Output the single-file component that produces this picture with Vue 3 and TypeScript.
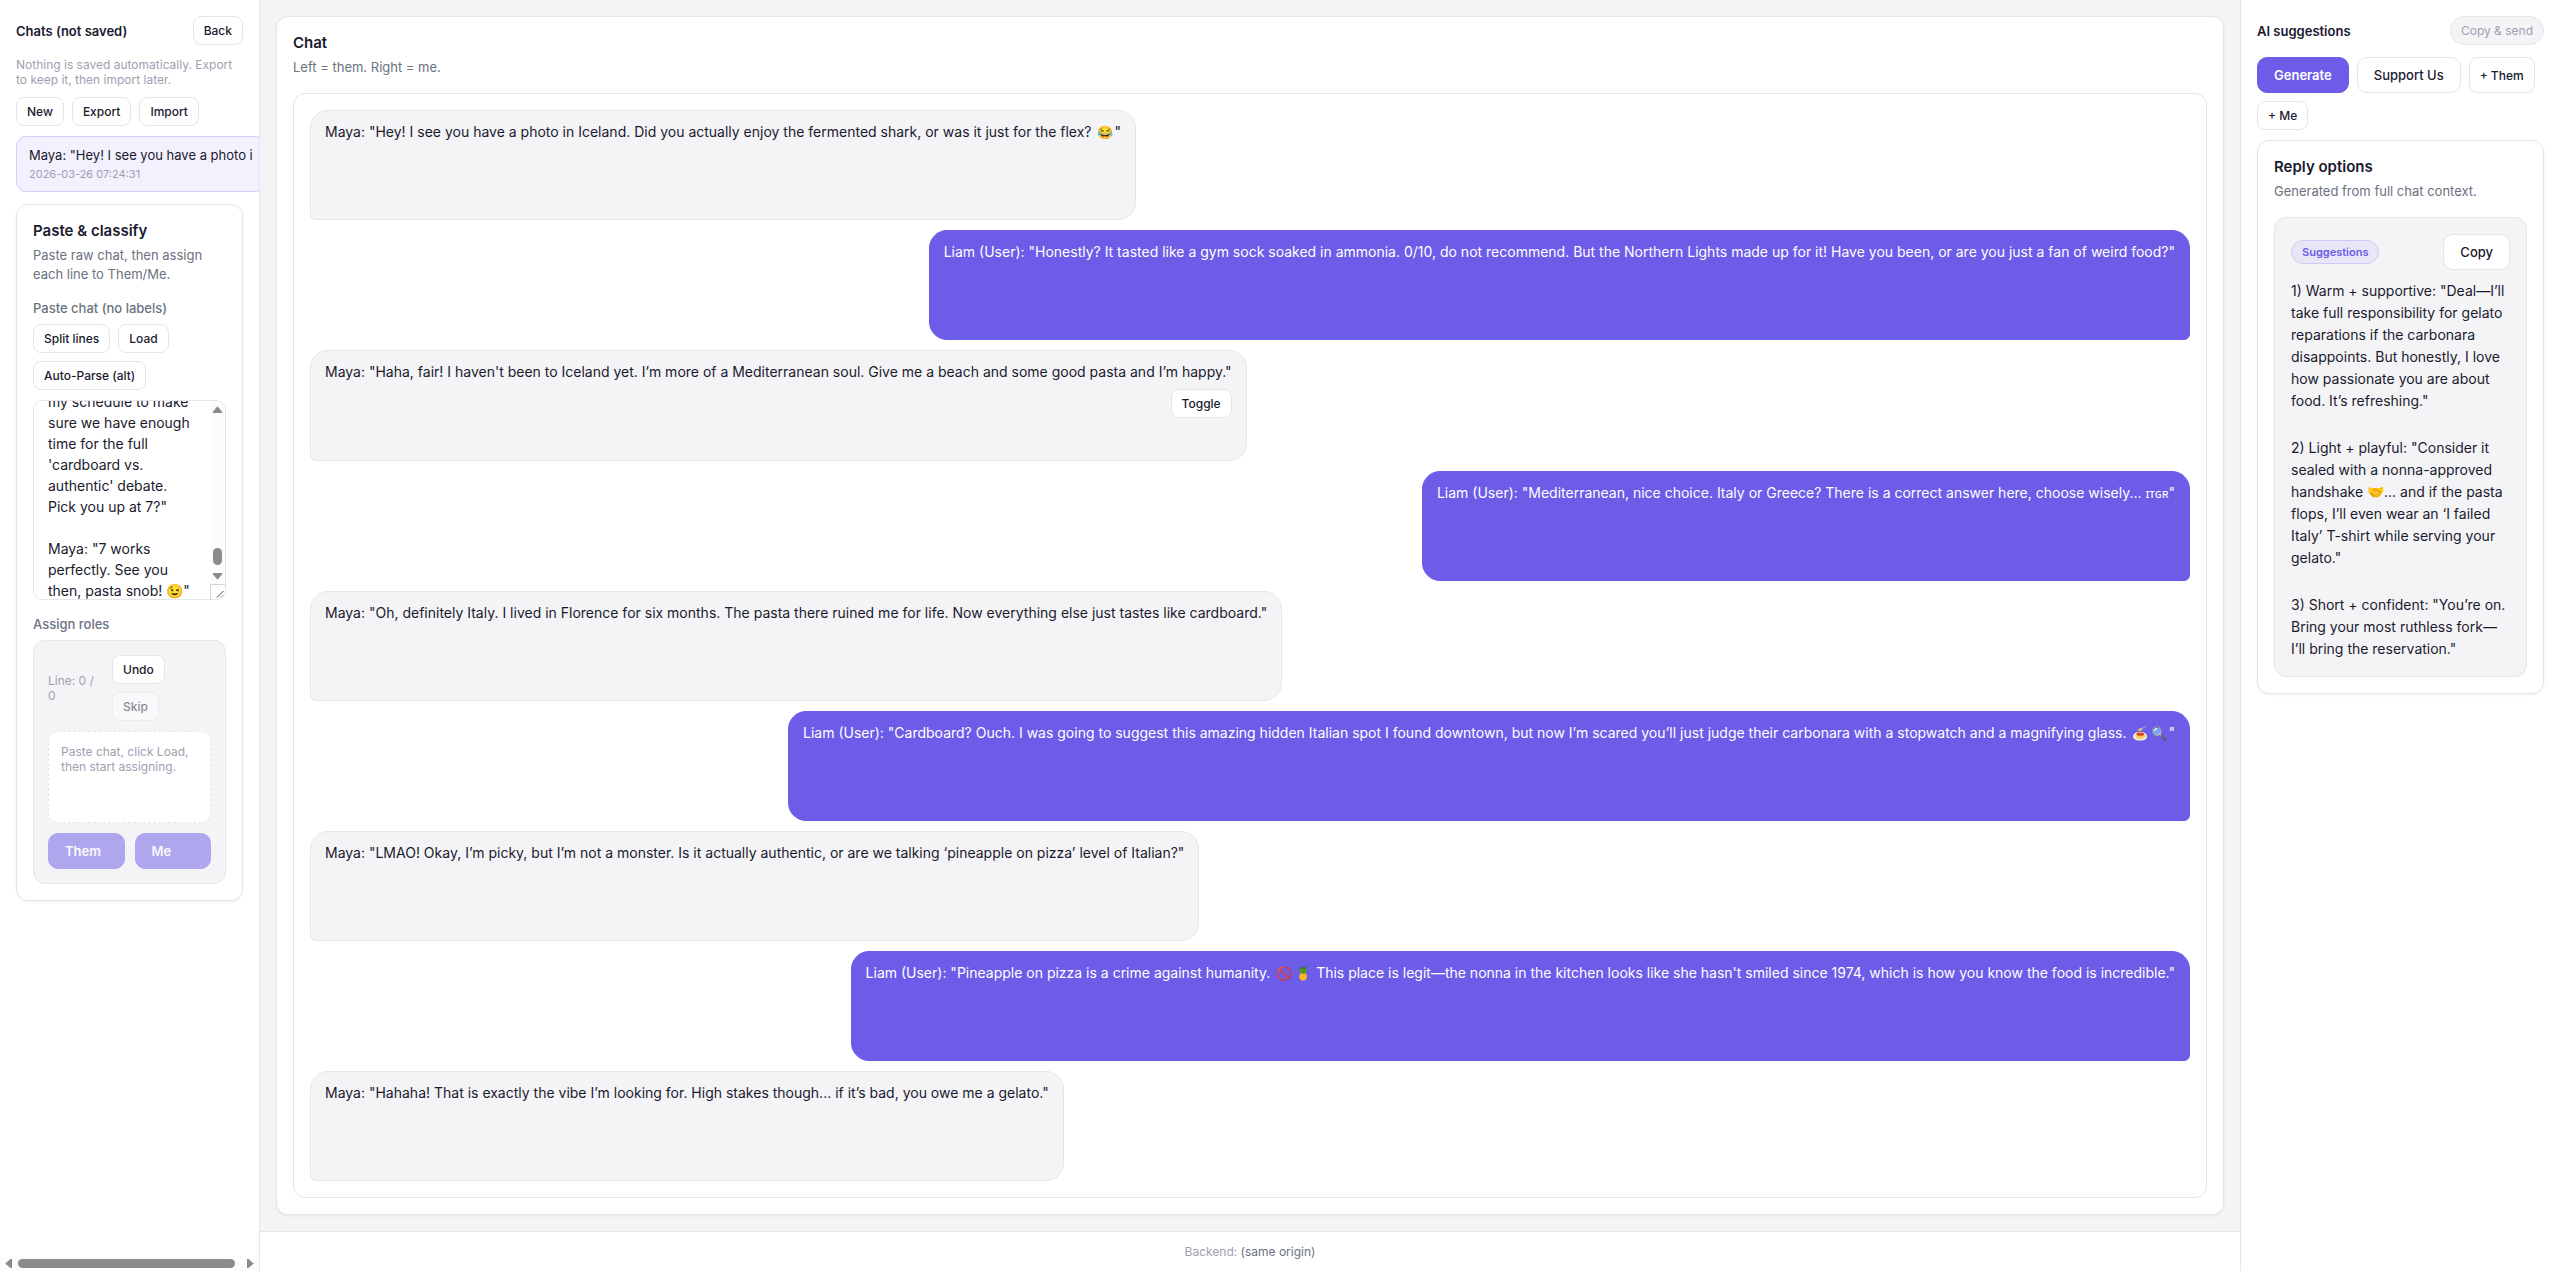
<script setup lang="ts">
import { onMounted, ref } from 'vue'

interface Message {
  from: 'them' | 'me'
  text: string
  toggle?: boolean
}

interface Part {
  kind: 'text' | 'emoji' | 'flags'
  value: string
}

const messages: Message[] = [
  { from: 'them', text: 'Maya: "Hey! I see you have a photo in Iceland. Did you actually enjoy the fermented shark, or was it just for the flex? 😂"' },
  { from: 'me', text: 'Liam (User): "Honestly? It tasted like a gym sock soaked in ammonia. 0/10, do not recommend. But the Northern Lights made up for it! Have you been, or are you just a fan of weird food?"' },
  { from: 'them', text: 'Maya: "Haha, fair! I haven\'t been to Iceland yet. I’m more of a Mediterranean soul. Give me a beach and some good pasta and I’m happy."', toggle: true },
  { from: 'me', text: 'Liam (User): "Mediterranean, nice choice. Italy or Greece? There is a correct answer here, choose wisely... ɪᴛɢʀ"' },
  { from: 'them', text: 'Maya: "Oh, definitely Italy. I lived in Florence for six months. The pasta there ruined me for life. Now everything else just tastes like cardboard."' },
  { from: 'me', text: 'Liam (User): "Cardboard? Ouch. I was going to suggest this amazing hidden Italian spot I found downtown, but now I’m scared you’ll just judge their carbonara with a stopwatch and a magnifying glass. 🍝🔍"' },
  { from: 'them', text: 'Maya: "LMAO! Okay, I’m picky, but I’m not a monster. Is it actually authentic, or are we talking ‘pineapple on pizza’ level of Italian?"' },
  { from: 'me', text: 'Liam (User): "Pineapple on pizza is a crime against humanity. 🚫🍍 This place is legit—the nonna in the kitchen looks like she hasn\'t smiled since 1974, which is how you know the food is incredible."' },
  { from: 'them', text: 'Maya: "Hahaha! That is exactly the vibe I’m looking for. High stakes though... if it’s bad, you owe me a gelato."' },
]

const replies: string[] = [
  '1) Warm + supportive: "Deal—I’ll take full responsibility for gelato reparations if the carbonara disappoints. But honestly, I love how passionate you are about food. It’s refreshing."',
  '2) Light + playful: "Consider it sealed with a nonna-approved handshake 🤝... and if the pasta flops, I’ll even wear an ‘I failed Italy’ T-shirt while serving your gelato."',
  '3) Short + confident: "You’re on. Bring your most ruthless fork—I’ll bring the reservation."',
]

// Splits a message so that emoji and flag codes can be set in their own type.
function parts(text: string): Part[] {
  return text
    .split(/(\p{Extended_Pictographic}|ɪᴛɢʀ)/u)
    .filter((s) => s !== '')
    .map((value): Part => {
      if (value === 'ɪᴛɢʀ') return { kind: 'flags', value }
      return { kind: /^\p{Extended_Pictographic}$/u.test(value) ? 'emoji' : 'text', value }
    })
}

const pasted = ref(
  messages.map((m) => m.text).join('\n\n') +
    '\n\nLiam (User): "It\'s a date. I\'ll be clearing my schedule to make sure we have enough time for the full \'cardboard vs. authentic\' debate. Pick you up at 7?"\n\nMaya: "7 works perfectly. See you then, pasta snob! 😉"',
)

const area = ref<HTMLTextAreaElement | null>(null)
onMounted(() => {
  const el = area.value
  if (el) el.scrollTop = el.scrollHeight - el.clientHeight - 14
})
</script>

<template>
  <div class="app">
    <aside class="side left">
      <div class="left-body">
        <header class="side-head">
          <h2>Chats (not saved)</h2>
          <button class="btn sm" type="button">Back</button>
        </header>
        <p class="note">Nothing is saved automatically. Export to keep it, then import later.</p>
        <div class="row">
          <button class="btn sm" type="button">New</button>
          <button class="btn sm" type="button">Export</button>
          <button class="btn sm" type="button">Import</button>
        </div>
        <button class="chat-item" type="button">
          <span class="chat-name">Maya: "Hey! I see you have a photo i</span>
          <span class="chat-date">2026-03-26 07:24:31</span>
        </button>
        <section class="card">
          <h3>Paste &amp; classify</h3>
          <p class="sub">Paste raw chat, then assign each line to Them/Me.</p>
          <label class="label" for="paste">Paste chat (no labels)</label>
          <div class="row">
            <button class="btn sm" type="button">Split lines</button>
            <button class="btn sm" type="button">Load</button>
            <button class="btn sm" type="button">Auto-Parse (alt)</button>
          </div>
          <div class="paste-wrap">
            <textarea id="paste" ref="area" v-model="pasted" class="paste" spellcheck="false"></textarea>
            <div class="vbar" aria-hidden="true">
              <svg width="9" height="7" viewBox="0 0 9 7"><path d="M4.500.2 9 5.500V7H0V5.500z" fill="#8b8b8b" /></svg>
              <span class="vthumb"></span>
              <svg width="9" height="7" viewBox="0 0 9 7"><path d="M4.500 6.800 9 1.500V0H0v1.500z" fill="#8b8b8b" /></svg>
            </div>
            <svg class="grip" width="15" height="15" viewBox="0 0 15 15" aria-hidden="true">
              <path d="M0 0h15v15H0z" fill="#fff" />
              <path d="M.5 15V.5H15" fill="none" stroke="#d4d4d4" />
              <path d="M7 13.500 13.500 7M11 13.500l2.500-2.500" fill="none" stroke="#444" />
            </svg>
          </div>
          <div class="label">Assign roles</div>
          <div class="assign">
            <div class="assign-top">
              <span class="line-count">Line: 0 / 0</span>
              <div class="row flush">
                <button class="btn sm" type="button">Undo</button>
                <button class="btn sm" type="button" disabled>Skip</button>
              </div>
            </div>
            <div class="preview">Paste chat, click Load, then start assigning.</div>
            <div class="roles">
              <button class="btn primary" type="button" disabled>Them</button>
              <button class="btn primary" type="button" disabled>Me</button>
            </div>
          </div>
        </section>
      </div>
      <div class="hbar" aria-hidden="true">
        <svg width="7" height="9" viewBox="0 0 7 9"><path d="M.2 4.500 5.500 0H7v9H5.500z" fill="#8b8b8b" /></svg>
        <span class="hthumb"></span>
        <svg width="7" height="9" viewBox="0 0 7 9"><path d="M6.800 4.500 1.500 0H0v9h1.500z" fill="#8b8b8b" /></svg>
      </div>
    </aside>

    <div class="center">
      <main class="stage">
        <section class="card chat">
          <h3>Chat</h3>
          <p class="sub">Left = them. Right = me.</p>
          <div class="thread">
            <article v-for="(m, i) in messages" :key="i" class="bubble" :class="m.from">
              <p><span v-for="(p, k) in parts(m.text)" :key="k" :class="p.kind">{{ p.value }}</span></p>
              <button v-if="m.toggle" class="btn sm" type="button">Toggle</button>
            </article>
          </div>
        </section>
      </main>
      <footer class="foot">Backend: <span>(same origin)</span></footer>
    </div>

    <aside class="side right">
      <header class="side-head">
        <h2>AI suggestions</h2>
        <button class="btn sm pill" type="button" disabled>Copy &amp; send</button>
      </header>
      <div class="row">
        <button class="btn primary" type="button">Generate</button>
        <button class="btn" type="button">Support Us</button>
        <button class="btn sm" type="button">+ Them</button>
        <button class="btn sm" type="button">+ Me</button>
      </div>
      <section class="card">
        <h3>Reply options</h3>
        <p class="sub">Generated from full chat context.</p>
        <div class="options">
          <div class="options-head">
            <span class="badge">Suggestions</span>
            <button class="btn" type="button">Copy</button>
          </div>
          <div class="replies">
            <p v-for="r in replies" :key="r">{{ r }}</p>
          </div>
        </div>
      </section>
    </aside>
  </div>
</template>

<style>
body {
  margin: 0;
  background: #f4f4f7;
}
</style>

<style scoped>
.app,
.app * {
  box-sizing: border-box;
}
.app {
  display: grid;
  grid-template-columns: 260px minmax(0, 1fr) 320px;
  min-height: 100vh;
  background: #f4f4f7;
  color: #1a1a2e;
  font-family: Inter, "Liberation Sans", sans-serif;
  font-size: 14px;
}
h2,
h3,
p {
  margin: 0;
}
h2 {
  font-size: 13px;
  line-height: 16px;
  font-weight: 600;
}
h3 {
  margin-bottom: 6px;
  font-size: 15px;
  line-height: 19px;
  font-weight: 600;
}
.side {
  min-width: 0;
  background: #fff;
}
.left {
  display: flex;
  flex-direction: column;
  border-right: 1px solid #e5e5ea;
}
.left-body {
  flex: 1;
  padding: 16px;
  overflow: hidden;
}
.hbar {
  display: flex;
  align-items: center;
  justify-content: space-between;
  height: 15px;
  padding: 0 5px;
  background: #fcfcfc;
}
.hthumb {
  flex: 1;
  height: 9px;
  margin: 0 12px 0 6px;
  border-radius: 5px;
  background: #8b8b8b;
}
.right {
  padding: 16px;
  border-left: 1px solid #e5e5ea;
}
.side-head {
  display: flex;
  align-items: center;
  justify-content: space-between;
  margin-bottom: 12px;
}
.note,
.line-count,
.preview {
  color: #a0a0b0;
  font-size: 12px;
  line-height: 15px;
}
.note {
  margin-bottom: 10px;
}
.row {
  display: flex;
  flex-wrap: wrap;
  gap: 8px;
  margin-bottom: 10px;
}
.row.flush {
  margin-bottom: 0;
}
.btn {
  padding: 9px 16px;
  border: 1px solid #e5e5ea;
  border-radius: 10px;
  background: #fff;
  color: #1a1a2e;
  font-family: inherit;
  font-size: 13px;
  line-height: 16px;
  font-weight: 500;
  text-align: left;
}
.btn.sm {
  padding: 6px 10px;
  border-radius: 8px;
  font-size: 12px;
  line-height: 15px;
}
.btn.primary {
  border-color: #6c5ce7;
  background: #6c5ce7;
  color: #fff;
  font-weight: 600;
}
.btn:disabled {
  opacity: 0.5;
}
.btn.pill {
  border-radius: 15px;
  background: #f4f4f7;
  color: #a0a0b0;
  font-weight: 400;
  opacity: 1;
}
.chat-item {
  display: flex;
  flex-direction: column;
  gap: 4px;
  width: max-content;
  margin-bottom: 12px;
  padding: 10px 12px;
  border: 1px solid #d3cef8;
  border-radius: 10px;
  background: #f3f1fd;
  color: #1a1a2e;
  font-family: inherit;
  text-align: left;
}
.chat-name {
  font-size: 13px;
  line-height: 16px;
}
.chat-date {
  color: #a0a0b0;
  font-size: 11px;
  line-height: 14px;
}
.card {
  padding: 16px;
  border: 1px solid #e5e5ea;
  border-radius: 12px;
  background: #fff;
  box-shadow: 0 1px 3px rgba(0, 0, 0, 0.06);
}
.sub {
  margin-bottom: 16px;
  color: #6b7280;
  font-size: 13px;
  line-height: 19px;
}
.label {
  display: block;
  margin-bottom: 8px;
  color: #6b7280;
  font-size: 13px;
  line-height: 16px;
  font-weight: 500;
}
.paste-wrap {
  position: relative;
  margin-bottom: 16px;
}
.paste {
  display: block;
  width: 100%;
  height: 200px;
  padding: 12px 29px 12px 14px;
  border: 1px solid #e5e5ea;
  border-radius: 10px;
  background: #fff;
  color: #1a1a2e;
  font-family: inherit;
  font-size: 14px;
  line-height: 21px;
  resize: none;
}
.vbar {
  position: absolute;
  top: 1px;
  right: 1px;
  bottom: 16px;
  display: flex;
  flex-direction: column;
  align-items: center;
  width: 15px;
  padding: 5px 0 4px;
  border-top-right-radius: 10px;
  background: #fcfcfc;
}
.vthumb {
  width: 9px;
  height: 17px;
  margin: auto 0 8px;
  border-radius: 5px;
  background: #8b8b8b;
}
.grip {
  position: absolute;
  right: 1px;
  bottom: 1px;
  border-bottom-right-radius: 9px;
}
.assign {
  padding: 14px;
  border: 1px solid #e5e5ea;
  border-radius: 12px;
  background: #f4f4f7;
}
.assign-top {
  display: grid;
  grid-template-columns: 54px 1fr;
  gap: 10px;
  align-items: center;
  margin-bottom: 10px;
}
.preview {
  min-height: 92px;
  margin-bottom: 10px;
  padding: 12px;
  border: 1px dashed #e5e5ea;
  border-radius: 10px;
  background: #fff;
}
.roles {
  display: grid;
  grid-template-columns: 1fr 1fr;
  gap: 10px;
}
.center {
  display: flex;
  flex-direction: column;
  min-width: 0;
}
.stage {
  display: flex;
  flex: 1;
  padding: 16px;
}
.chat {
  display: flex;
  flex: 1;
  flex-direction: column;
  min-width: 0;
}
.thread {
  display: flex;
  flex: 1;
  flex-direction: column;
  gap: 10px;
  padding: 16px;
  border: 1px solid #e5e5ea;
  border-radius: 12px;
}
.bubble {
  display: flex;
  flex: 1 0 auto;
  flex-direction: column;
  align-items: flex-end;
  gap: 6px;
  min-height: 110px;
  max-width: 75%;
  padding: 10px 14px;
  border: 1px solid #e5e5ea;
  font-size: 14px;
  line-height: 22px;
}
.bubble.them {
  align-self: flex-start;
  border-radius: 18px 18px 18px 6px;
  background: #f4f4f7;
}
.bubble.me {
  align-self: flex-end;
  border-color: #6c5ce7;
  border-radius: 18px 18px 6px 18px;
  background: #6c5ce7;
  color: #fff;
}
.emoji {
  margin: 0 1px 0 2px;
  font-size: 13px;
}
.flags {
  font-family: "Noto Sans", "DejaVu Sans", sans-serif;
  font-size: 12px;
}
.foot {
  padding: 12px 16px;
  border-top: 1px solid #e5e5ea;
  background: #fff;
  color: #a0a0b0;
  font-size: 12px;
  line-height: 15px;
  text-align: center;
}
.foot span {
  color: #6b7280;
}
.options {
  padding: 16px;
  border: 1px solid #e5e5ea;
  border-radius: 12px;
  background: #f4f4f7;
}
.options-head {
  display: flex;
  align-items: center;
  justify-content: space-between;
  margin-bottom: 10px;
}
.badge {
  padding: 4px 10px;
  border: 1px solid #cfc9f5;
  border-radius: 12px;
  background: #e8e6f6;
  color: #6c5ce7;
  font-size: 11px;
  line-height: 14px;
  font-weight: 600;
}
.replies {
  display: flex;
  flex-direction: column;
  gap: 25px;
  line-height: 22px;
}
</style>
